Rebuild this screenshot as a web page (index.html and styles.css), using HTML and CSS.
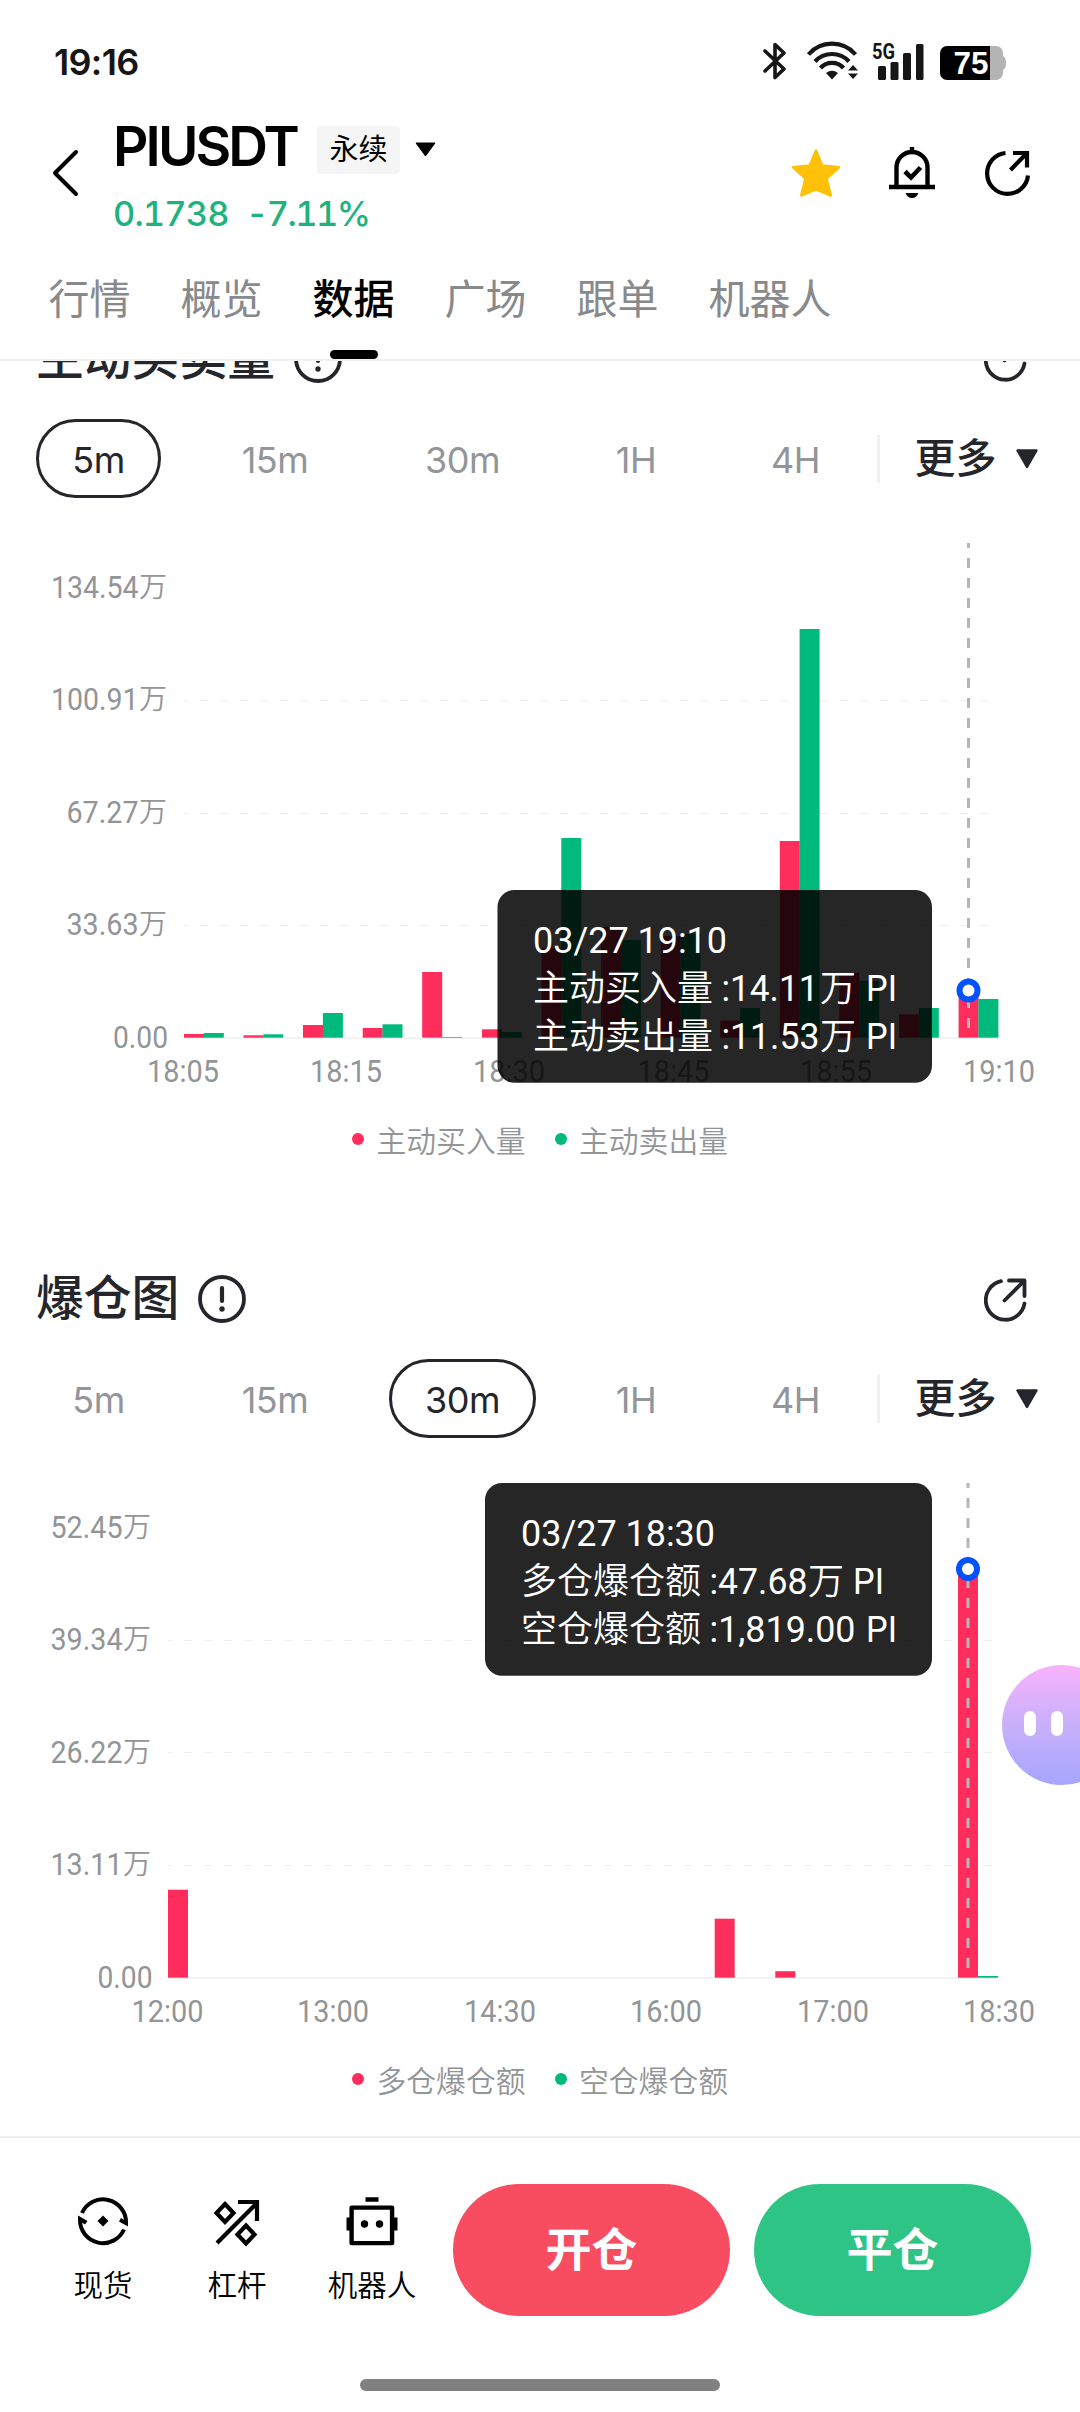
FILE: index.html
```html
<!DOCTYPE html>
<html lang="zh-CN">
<head>
<meta charset="utf-8">
<meta name="viewport" content="width=device-width">
<title>PIUSDT 永续</title>
<link rel="stylesheet" href="styles.css">
</head>
<body>
<svg class="defs" width="0" height="0" aria-hidden="true">
  <symbol id="info" viewBox="0 0 48 48">
    <circle cx="24" cy="24" r="22" fill="none" stroke="currentColor" stroke-width="3.8"/>
    <path d="M24 13v13" stroke="currentColor" stroke-width="4.2" stroke-linecap="round"/>
    <circle cx="24" cy="34" r="2.7" fill="currentColor"/>
  </symbol>
  <symbol id="share" viewBox="0 0 44 44">
    <path d="M17 3.2A19.5 19.5 0 1 0 40.5 25.5M25 2.5h15.5V18M40 3L20.5 22.5" fill="none" stroke="currentColor" stroke-width="3.8" stroke-linecap="round" stroke-linejoin="round"/>
  </symbol>
  <symbol id="caret" viewBox="0 0 24 20">
    <path d="M2.5 1.5h19L12 18z" fill="currentColor" stroke="currentColor" stroke-width="2.4" stroke-linejoin="round"/>
  </symbol>
</svg>

<div class="app">
  <header class="header">
    <div class="status">
      <span class="clock">19:16</span>
      <svg class="status-icons" viewBox="0 0 246 40" width="246" height="40">
        <path d="M5 11l19 18-9 8.5V4.5l9 8.5L5 31" fill="none" stroke="#161616" stroke-width="3.6" stroke-linejoin="round" stroke-linecap="round"/>
        <g fill="none" stroke="#161616" stroke-width="4.2">
          <path d="M48.500 14.500a31 31 0 0 1 47 0"/>
          <path d="M55 21.500a23 23 0 0 1 34 0"/>
          <path d="M60.500 28a15.500 15.500 0 0 1 23 0"/>
        </g>
        <path d="M66 33q6-4.500 12 0l-6 6.500zM88 30.500l5-5.500 5 5.500zM88 33.500h10l-5 5.500z" fill="#161616"/>
        <text class="net" x="112" y="18.500" textLength="23" lengthAdjust="spacingAndGlyphs">5G</text>
        <g fill="#161616">
          <rect x="118" y="26" width="8" height="14" rx="1.500"/>
          <rect x="130.500" y="22" width="8" height="18" rx="1.500"/>
          <rect x="143" y="13" width="8" height="27" rx="1.500"/>
          <rect x="156" y="4" width="7.500" height="36" rx="1.500"/>
        </g>
        <path d="M230 6h6a7 7 0 0 1 7 7v3q3 1.500 3 7t-3 7v3a7 7 0 0 1-7 7h-6z" fill="#b4b4b4"/>
        <path d="M187 6h43v34h-43a7 7 0 0 1-7-7V13a7 7 0 0 1 7-7z" fill="#000"/>
        <text class="level" x="193.500" y="34" textLength="35" lengthAdjust="spacingAndGlyphs">75</text>
      </svg>
    </div>

    <div class="pair-bar">
      <svg class="back" viewBox="0 0 28 48" width="28" height="48"><path d="M25 3L4 24l21 21" fill="none" stroke="#000" stroke-width="4" stroke-linecap="round" stroke-linejoin="round"/></svg>
      <div class="pair">
        <div class="pair-top">
          <span class="symbol">PIUSDT</span>
          <span class="badge">永续</span>
          <svg class="pair-caret" width="21" height="15" viewBox="0 0 21 15"><path d="M1 1h19l-9.500 13z" stroke="#000" stroke-linejoin="round"/></svg>
        </div>
        <div class="pair-price"><span class="price">0.1738</span><span class="change">-7.11%</span></div>
      </div>
      <div class="actions">
        <svg viewBox="0 0 50 50" width="50" height="50"><path d="M25 2.500l6.300 15 16.700 1.800-12.400 11.200L39.800 47.500 25 41.300 10.200 47.500l4.200-17L2 19.300l16.700-1.800z" fill="#ffc107" stroke="#ffc107" stroke-width="2.500" stroke-linejoin="round"/></svg>
        <svg viewBox="0 0 46 52" width="46" height="52">
          <path d="M7.500 40V20.500a15.500 15.500 0 0 1 31 0V40M0 40h46M23 5.500V0" fill="none" stroke="#000" stroke-width="4.400"/>
          <path d="M16 24.500l6 6 9.500-10" fill="none" stroke="#000" stroke-width="4.600"/>
          <path d="M16.500 46h13q-2 5-6.500 5t-6.500-5z"/>
        </svg>
        <svg class="refresh" viewBox="0 0 46 46" width="46" height="46"><path d="M20.500 3A20.500 20.500 0 1 0 43 25.500M28 3h14v14.500M42 3L25.500 20" fill="none" stroke="#000" stroke-width="4.200"/></svg>
      </div>
    </div>

    <nav class="tabs">
      <a>行情</a><a>概览</a><a class="active">数据</a><a>广场</a><a>跟单</a><a>机器人</a>
    </nav>
  </header>

  <main class="content">
    <section class="panel">
      <div class="panel-head">
        <h2>主动买卖量</h2><svg class="info" width="48" height="48"><use href="#info"/></svg>
        <svg class="share" width="44" height="44"><use href="#share"/></svg>
      </div>
      <div class="ranges">
        <span class="range w-5m selected">5m</span><span class="range w-15m">15m</span><span class="range w-30m">30m</span><span class="range w-1h">1H</span><span class="range w-4h">4H</span>
        <span class="more"><span class="more-text">更多</span><svg width="24" height="20"><use href="#caret"/></svg></span>
      </div>
      <svg class="chart" viewBox="0 498 1080 607" width="1080" height="607">
        <g class="grid"><path d="M184 700.500H990M184 813.500H990M184 925.500H990"/></g>
        <path class="axis" d="M184 1038H998"/>
        <g class="label end">
          <text x="138.500" y="598" textLength="87.500" lengthAdjust="spacingAndGlyphs">134.54</text><text x="138.500" y="710" textLength="87.500" lengthAdjust="spacingAndGlyphs">100.91</text>
          <text x="138.500" y="823" textLength="72" lengthAdjust="spacingAndGlyphs">67.27</text><text x="138.500" y="935" textLength="72" lengthAdjust="spacingAndGlyphs">33.63</text>
          <text x="168" y="1047.500" textLength="55" lengthAdjust="spacingAndGlyphs">0.00</text>
        </g>
        <g class="unit"><text x="139" y="597">万</text><text x="139" y="709">万</text><text x="139" y="822">万</text><text x="139" y="934">万</text></g>
        <g class="label mid">
          <text x="183" y="1082" textLength="72" lengthAdjust="spacingAndGlyphs">18:05</text><text x="346" y="1082" textLength="72" lengthAdjust="spacingAndGlyphs">18:15</text><text x="509" y="1082" textLength="72" lengthAdjust="spacingAndGlyphs">18:30</text>
          <text x="673.500" y="1082" textLength="72" lengthAdjust="spacingAndGlyphs">18:45</text><text x="836" y="1082" textLength="72" lengthAdjust="spacingAndGlyphs">18:55</text><text x="999" y="1082" textLength="72" lengthAdjust="spacingAndGlyphs">19:10</text>
        </g>
        <g class="buy">
          <rect x="184" y="1034" width="20" height="3.700"/><rect x="243.500" y="1035.300" width="20" height="2.400"/>
          <rect x="303" y="1025" width="20" height="12.700"/><rect x="362.700" y="1028" width="20" height="9.700"/>
          <rect x="422.200" y="972" width="20" height="65.700"/><rect x="482" y="1029.300" width="20" height="8.400"/>
          <rect x="541.500" y="948" width="20" height="89.700"/><rect x="601" y="927" width="20" height="110.700"/>
          <rect x="660.700" y="936" width="20" height="101.700"/><rect x="720.200" y="1020.700" width="20" height="17"/>
          <rect x="779.800" y="841" width="20" height="196.700"/><rect x="839.300" y="973" width="20" height="64.700"/>
          <rect x="899" y="1014.300" width="20" height="23.400"/><rect x="958.600" y="991" width="20" height="46.700"/>
        </g>
        <g class="sell">
          <rect x="203.800" y="1033" width="20" height="4.700"/><rect x="263.300" y="1034.300" width="20" height="3.400"/>
          <rect x="322.900" y="1013" width="20" height="24.700"/><rect x="382.500" y="1024.300" width="20" height="13.400"/>
          <rect x="442" y="1037" width="20" height=".7"/><rect x="501.700" y="1032" width="20" height="5.700"/>
          <rect x="561.300" y="838" width="20" height="199.700"/><rect x="620.900" y="940" width="20" height="97.700"/>
          <rect x="680.500" y="934" width="20" height="103.700"/><rect x="740.100" y="1008" width="20" height="29.700"/>
          <rect x="799.600" y="629" width="20" height="408.700"/><rect x="859.200" y="981" width="20" height="56.700"/>
          <rect x="918.800" y="1008" width="20" height="29.700"/><rect x="978.400" y="999" width="20" height="38.700"/>
        </g>
        <path class="cursor" d="M968.500 543V1037"/>
        <circle class="marker" cx="968.500" cy="990.500" r="9"/>
        <rect class="tip" x="497.500" y="890" width="434.500" height="192.700" rx="17"/>
        <g class="tip-text">
          <text x="533" y="952.700" textLength="194" lengthAdjust="spacingAndGlyphs">03/27 19:10</text>
          <text class="cjk" x="533" y="1001">主动买入量</text><text x="721.500" y="1001" textLength="97" lengthAdjust="spacingAndGlyphs">:14.11</text><text class="cjk" x="820" y="1001">万</text><text x="866" y="1001" textLength="31" lengthAdjust="spacingAndGlyphs">PI</text>
          <text class="cjk" x="533" y="1049">主动卖出量</text><text x="721.500" y="1049" textLength="98" lengthAdjust="spacingAndGlyphs">:11.53</text><text class="cjk" x="820" y="1049">万</text><text x="866" y="1049" textLength="31" lengthAdjust="spacingAndGlyphs">PI</text>
        </g>
      </svg>
      <div class="legend"><span class="item"><i class="dot dot-buy"></i>主动买入量</span><span class="item"><i class="dot dot-sell"></i>主动卖出量</span></div>
    </section>

    <section class="panel">
      <div class="panel-head">
        <h2>爆仓图</h2><svg class="info" width="48" height="48"><use href="#info"/></svg>
        <svg class="share" width="44" height="44"><use href="#share"/></svg>
      </div>
      <div class="ranges">
        <span class="range w-5m">5m</span><span class="range w-15m">15m</span><span class="range w-30m selected">30m</span><span class="range w-1h">1H</span><span class="range w-4h">4H</span>
        <span class="more"><span class="more-text">更多</span><svg width="24" height="20"><use href="#caret"/></svg></span>
      </div>
      <svg class="chart" viewBox="0 1438 1080 607" width="1080" height="607">
        <g class="grid"><path d="M168 1640.500H998M168 1752.500H998M168 1865.500H998"/></g>
        <path class="axis" d="M168 1978H998"/>
        <g class="label end">
          <text x="122.500" y="1538" textLength="72" lengthAdjust="spacingAndGlyphs">52.45</text><text x="122.500" y="1650" textLength="72" lengthAdjust="spacingAndGlyphs">39.34</text>
          <text x="122.500" y="1763" textLength="72" lengthAdjust="spacingAndGlyphs">26.22</text><text x="122.500" y="1875" textLength="72" lengthAdjust="spacingAndGlyphs">13.11</text>
          <text x="152.500" y="1987.500" textLength="55" lengthAdjust="spacingAndGlyphs">0.00</text>
        </g>
        <g class="unit"><text x="123" y="1537">万</text><text x="123" y="1649">万</text><text x="123" y="1762">万</text><text x="123" y="1874">万</text></g>
        <g class="label mid">
          <text x="167.500" y="2022" textLength="72" lengthAdjust="spacingAndGlyphs">12:00</text><text x="333" y="2022" textLength="72" lengthAdjust="spacingAndGlyphs">13:00</text><text x="500" y="2022" textLength="72" lengthAdjust="spacingAndGlyphs">14:30</text>
          <text x="666" y="2022" textLength="72" lengthAdjust="spacingAndGlyphs">16:00</text><text x="833" y="2022" textLength="72" lengthAdjust="spacingAndGlyphs">17:00</text><text x="999" y="2022" textLength="72" lengthAdjust="spacingAndGlyphs">18:30</text>
        </g>
        <g class="buy">
          <rect x="168" y="1889.700" width="20" height="88"/><rect x="714.700" y="1918.700" width="20" height="59"/>
          <rect x="775.300" y="1971.200" width="20" height="6.500"/><rect x="958" y="1569" width="20" height="408.700"/>
        </g>
        <g class="sell"><rect x="978" y="1976" width="20" height="1.700"/></g>
        <path class="cursor" d="M968 1483V1977"/>
        <circle class="marker" cx="968" cy="1569" r="9"/>
        <rect class="tip" x="485" y="1483" width="447" height="192.700" rx="17"/>
        <g class="tip-text">
          <text x="521" y="1545.700" textLength="194" lengthAdjust="spacingAndGlyphs">03/27 18:30</text>
          <text class="cjk" x="521" y="1594">多仓爆仓额</text><text x="709.500" y="1594" textLength="98" lengthAdjust="spacingAndGlyphs">:47.68</text><text class="cjk" x="808" y="1594">万</text><text x="853" y="1594" textLength="31" lengthAdjust="spacingAndGlyphs">PI</text>
          <text class="cjk" x="521" y="1642">空仓爆仓额</text><text x="709.500" y="1642" textLength="146" lengthAdjust="spacingAndGlyphs">:1,819.00</text><text x="866" y="1642" textLength="31" lengthAdjust="spacingAndGlyphs">PI</text>
        </g>
      </svg>
      <div class="legend"><span class="item"><i class="dot dot-buy"></i>多仓爆仓额</span><span class="item"><i class="dot dot-sell"></i>空仓爆仓额</span></div>
    </section>
  </main>

  <footer class="footer">
    <div class="trade">
      <a class="shortcut spot">
        <svg viewBox="0 0 52 52" width="52" height="52">
          <path d="M5 18A23 23 0 0 1 49 28M47 34.500A23 23 0 0 1 3 25" fill="none" stroke="#000" stroke-width="4"/>
          <path d="M51 27.500v4l-9-5 2-3.500zM1 25v-4.500l9.500 5.500-2.500 3.500z"/>
          <path d="M26 20.500l5.500 5.500-5.500 5.500-5.500-5.500z"/>
        </svg>现货</a>
      <a class="shortcut lever">
        <svg viewBox="0 0 52 52" width="52" height="52"><path d="M6 48L46 8M27 7h19v19M14 9l8.500 9-8.500 9-8.500-9zM35 30.500l8.500 9-8.500 9-8.500-9z" fill="none" stroke="#000" stroke-width="4.200"/></svg>杠杆</a>
      <a class="shortcut bot">
        <svg viewBox="0 0 52 52" width="52" height="52"><path d="M5.600 12.600h40.500v35.500H5.600zM19.500 4.500h13" fill="none" stroke="#000" stroke-width="4.400" stroke-linejoin="round"/><path d="M.5 22.500h5v13h-5zM46.500 22.500h5v13h-5z"/><circle cx="18.500" cy="29" r="3.700"/><circle cx="33.500" cy="29" r="3.700"/></svg>机器人</a>
      <button class="btn open">开仓</button>
      <button class="btn close">平仓</button>
    </div>
    <div class="home"></div>
  </footer>

  <div class="assistant"><i></i><i></i></div>
</div>
</body>
</html>
```

FILE: styles.css
```css
* { box-sizing: border-box; }
body { margin: 0; background: #fff; font-family: Inter, "Noto Sans CJK SC", sans-serif; color: #000; }
.defs { display: block; position: absolute; }
svg { display: block; flex: none; }

.app { position: relative; width: 1080px; height: 2412px; display: flex; flex-direction: column; overflow: hidden; }

/* Header */
.header { flex: none; height: 361px; border-bottom: 2px solid #f2f2f3; display: flex; flex-direction: column; }
.status { height: 120px; padding: 0 74px 0 54px; display: flex; align-items: center; justify-content: space-between; }
.clock { font-size: 36px; font-weight: 600; letter-spacing: -.7px; line-height: 40px; padding-top: 3px; color: #161616; }
.net { font: 700 22px Roboto, sans-serif; fill: #161616; }
.level { font: 700 31px "Liberation Sans", sans-serif; fill: #fff; }

.pair-bar { height: 120px; padding: 0 49px 0 51px; display: flex; align-items: flex-start; }
.back { margin-top: 29px; }
.pair { margin-left: 34px; flex: 1; }
.pair-top { height: 59px; display: flex; align-items: center; }
.symbol { width: 188px; font-size: 55px; font-weight: 600; letter-spacing: -2.9px; line-height: 59px; margin-top: -7px; white-space: nowrap; }
.badge { width: 83px; height: 48px; margin-left: 16px; border-radius: 4px; background: #f5f5f5; font-size: 29px; line-height: 47px; text-align: center; }
.pair-caret { margin-left: 14.500px; }
.pair-price { margin-top: 13px; height: 44px; line-height: 44px; font-size: 34.500px; font-weight: 500; letter-spacing: -.9px; font-variant-numeric: tabular-nums; color: #1fb27e; display: flex; }
.price { width: 133px; }
.change { letter-spacing: -1.600px; }
.actions { display: flex; align-items: center; gap: 48px; margin-top: 27px; }
.refresh { margin-left: 2px; }

.tabs { flex: 1; padding-left: 48.500px; display: flex; gap: 50px; font-size: 41px; line-height: 119px; color: #87898b; }
.tabs a { display: flex; flex-direction: column; align-items: center; font-weight: 400; }
.tabs .active { color: #000; font-weight: 450; }
.tabs .active::after { content: ""; width: 48px; height: 9px; margin-top: -9px; border-radius: 5px; background: #000; }

/* Data panels */
.content { flex: 1; min-height: 0; overflow: hidden; display: flex; flex-direction: column; }
.panel { flex: none; height: 940px; }
.panel:first-child { margin-top: -62px; }
.panel-head { height: 120px; padding: 0 52px 0 36px; display: flex; align-items: center; color: #24262b; }
.panel-head h2 { margin: -2px 0 0; font-size: 47.800px; font-weight: 450; line-height: 60px; }
.info { margin-left: 18.500px; }
.share { margin-left: auto; margin-top: 2px; }

.ranges { height: 79px; padding-left: 36px; display: flex; align-items: center; gap: 44.500px; font-size: 36px; color: #929599; }
.range { height: 79px; line-height: 77px; text-align: center; border: 3px solid transparent; border-radius: 40px; letter-spacing: -.5px; }
.selected { color: #24262b; border-color: #24262b; }
.w-5m { width: 125px; } .w-15m { width: 139px; } .w-30m { width: 147px; } .w-1h { width: 111px; } .w-4h { width: 119px; }
.more { margin-left: -23px; height: 48px; border-left: 3px solid #f0f0f2; padding-left: 35px; display: flex; align-items: center; gap: 18.500px; font-size: 41px; color: #24262b; font-weight: 450; }
.more-text { line-height: 48px; margin-top: -1px; }

.chart { font-family: Roboto, "Noto Sans CJK SC", sans-serif; }
.grid path { fill: none; stroke: #ececee; stroke-width: 1; stroke-dasharray: 7.500 12.500; stroke-dashoffset: 3.500; }
.axis { stroke: #f3f3f4; stroke-width: 2; }
.label { font-size: 32px; fill: #929597; }
.end { text-anchor: end; }
.mid { text-anchor: middle; }
.unit { font-size: 28px; font-weight: 350; font-family: "Noto Sans CJK SC", sans-serif; fill: #929597; }
.buy { fill: #ff2d5b; }
.sell { fill: #00b97c; }
.cursor { fill: none; stroke: #b4b5b7; stroke-width: 3; stroke-dasharray: 10 10; stroke-dashoffset: 5; }
.marker { fill: #fff; stroke: #0052ff; stroke-width: 6; }
.tip { fill: rgba(0, 0, 0, .85); }
.tip-text { font-size: 36px; fill: #fff; }
.tip-text .cjk { font-family: "Noto Sans CJK SC", sans-serif; font-weight: 350; }

.legend { height: 67px; display: flex; align-items: center; justify-content: center; gap: 29px; font: 350 29.800px "Noto Sans CJK SC", sans-serif; color: #929597; }
.item { display: flex; align-items: center; gap: 12.500px; }
.dot { width: 12px; height: 12px; border-radius: 50%; }
.dot-buy { background: #ff2d5b; }
.dot-sell { background: #00b97c; }

/* Footer */
.footer { flex: none; height: 276px; border-top: 2px solid #f0f0f1; background: #fff; display: flex; flex-direction: column; align-items: center; }
.trade { width: 1080px; height: 178px; padding: 46px 48px 0 36px; display: flex; }
.shortcut { width: 134px; height: 132px; padding-top: 11px; display: flex; flex-direction: column; align-items: center; gap: 16px; font-size: 29.500px; line-height: 44px; font-weight: 350; }
.bot { width: 136px; }
.btn { width: 277px; height: 132px; border: 0; border-radius: 66px; color: #fff; font: 600 46px "Noto Sans CJK SC", sans-serif; padding: 0 0 8px; }
.open { margin-left: 13px; background: #f84d60; }
.close { margin-left: 24px; background: #2dc486; }
.home { width: 360px; height: 12px; margin-top: 63px; border-radius: 6px; background: #808080; }

.assistant { position: absolute; right: -42px; top: 1665px; width: 120px; height: 120px; padding-left: 22px; border-radius: 60px; background: linear-gradient(180deg, #f8b2fc, #c8b0fb 50%, #a6a5ff); display: flex; align-items: center; gap: 15px; }
.assistant i { width: 12px; height: 25px; margin-top: -3px; border-radius: 6px; background: #fff; }
```
